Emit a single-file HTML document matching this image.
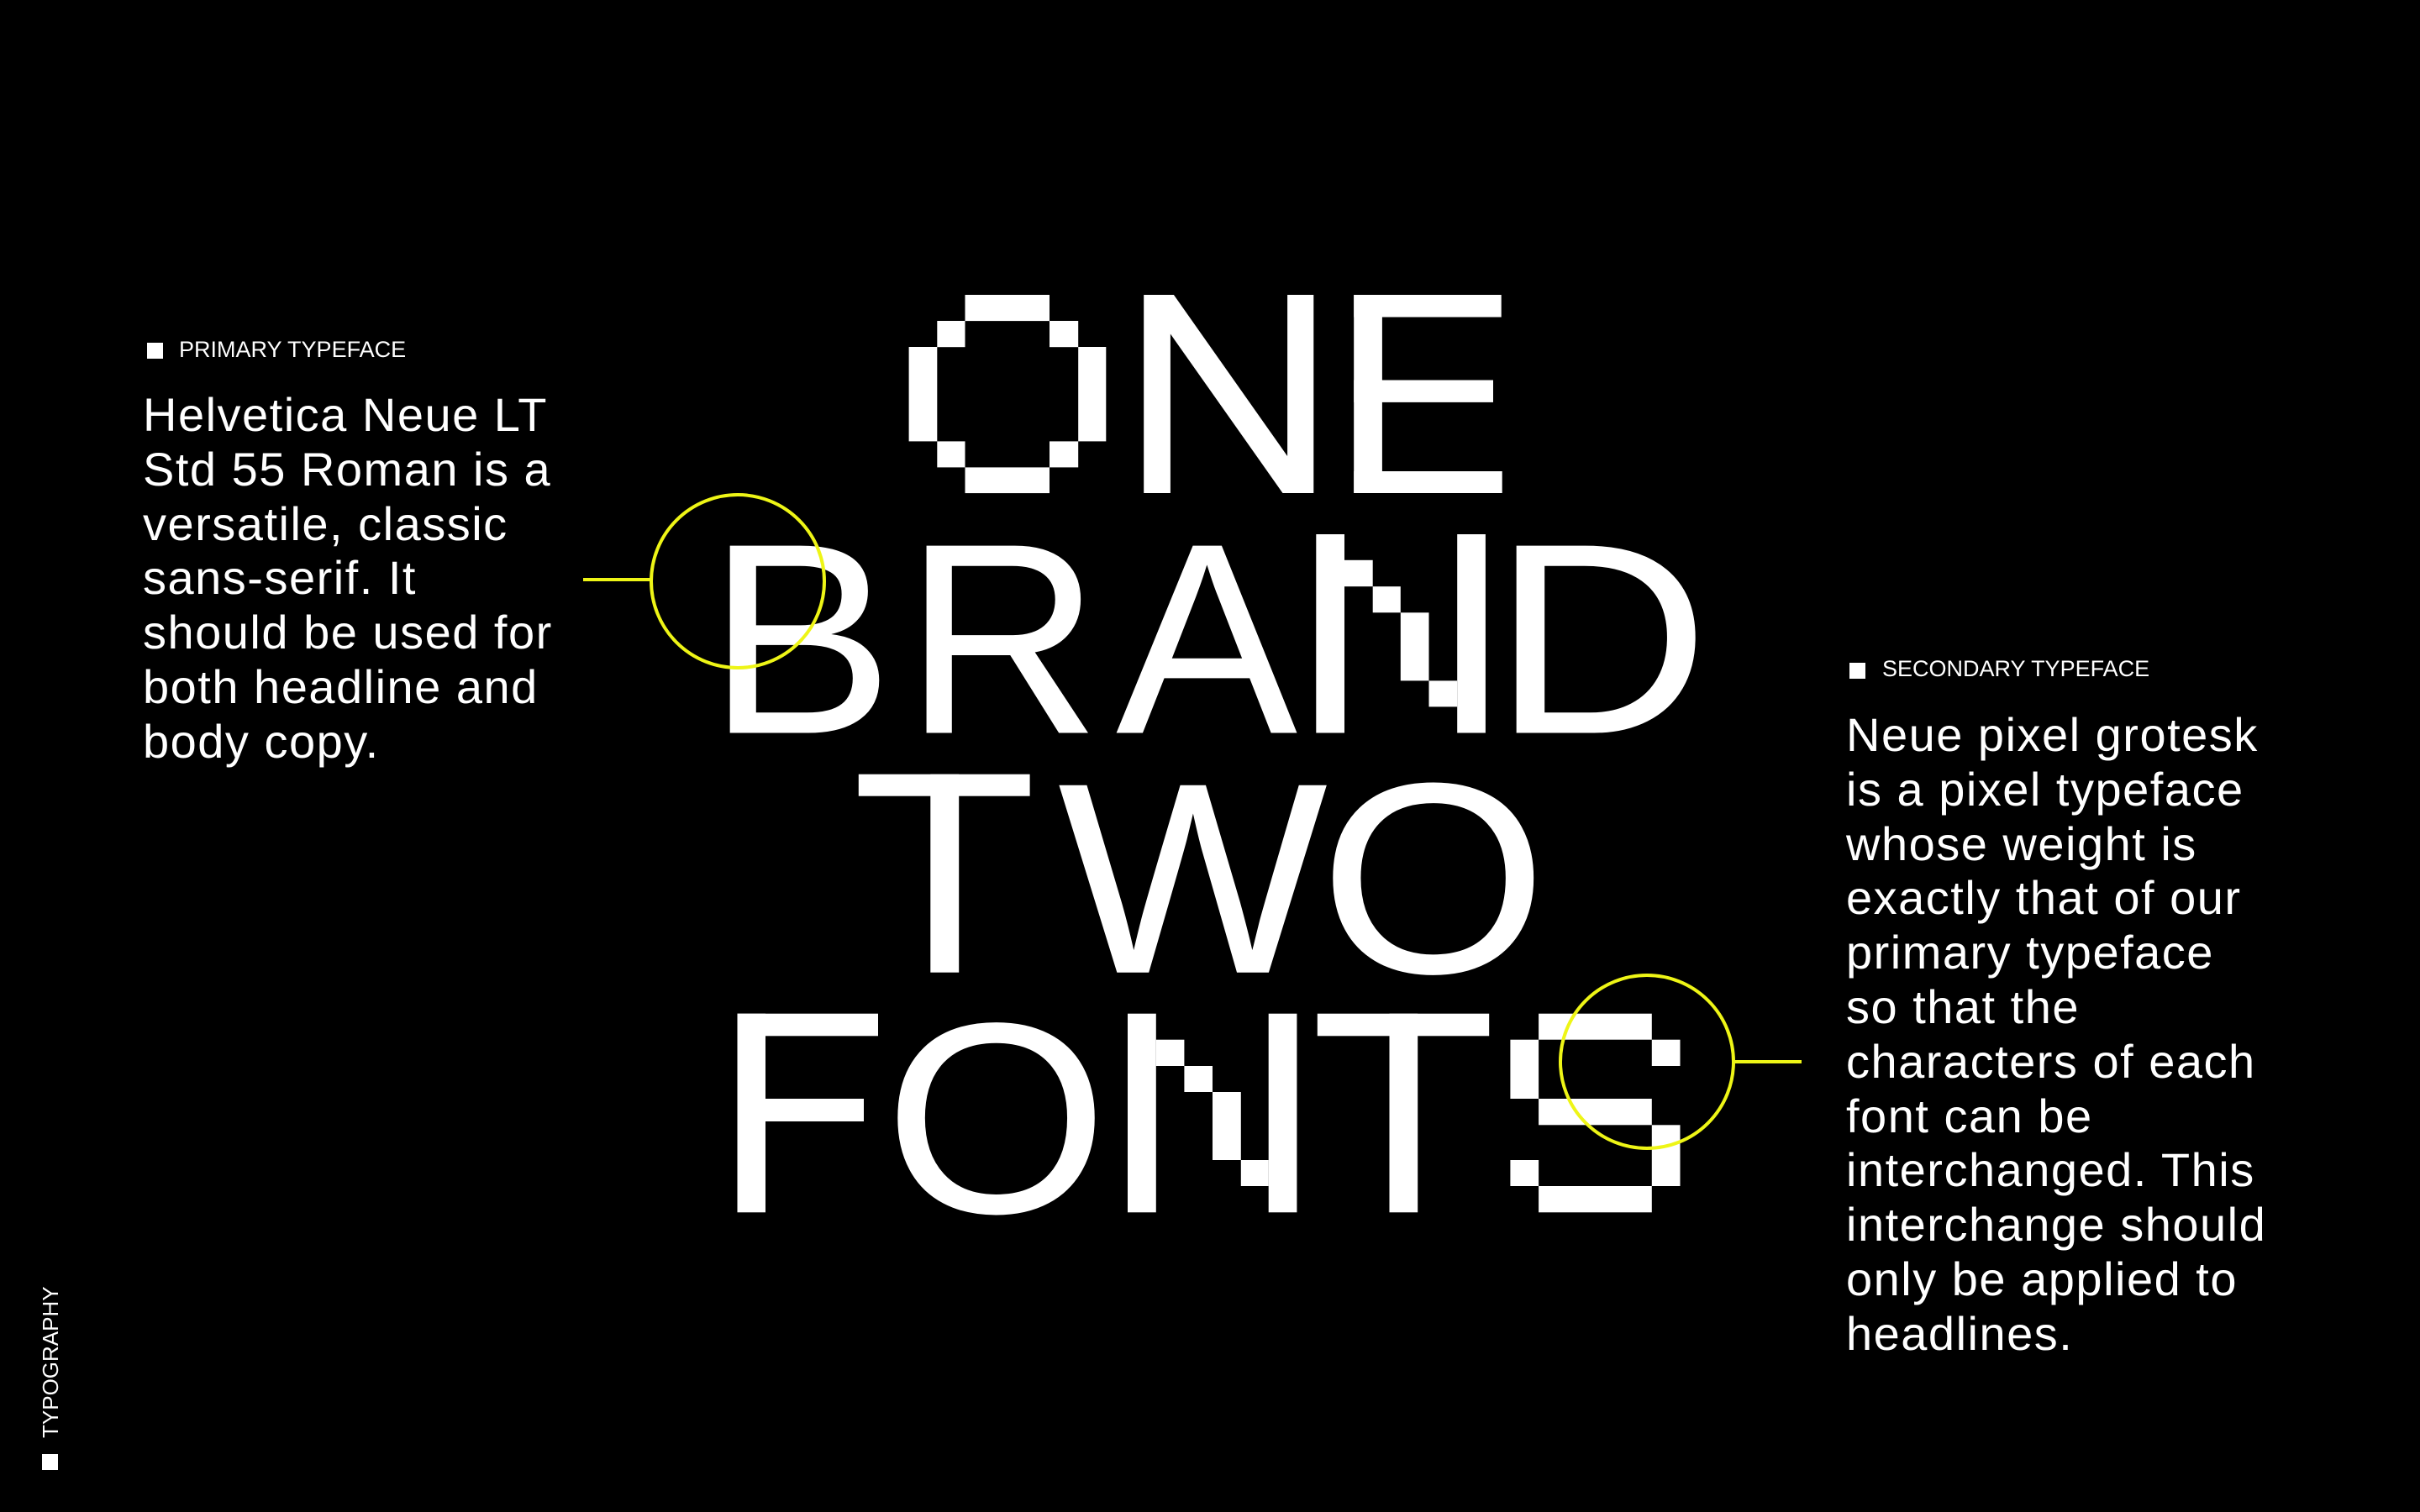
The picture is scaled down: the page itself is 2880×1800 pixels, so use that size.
<!DOCTYPE html>
<html><head><meta charset="utf-8">
<style>
html,body{margin:0;padding:0;background:#000;}
body{width:2880px;height:1800px;position:relative;overflow:hidden;font-family:"Liberation Sans",sans-serif;color:#fff;}
.sq{position:absolute;background:#fff;width:19px;height:19px;}
.lbl{position:absolute;font-size:27px;line-height:27px;white-space:nowrap;}
.body{position:absolute;font-size:56px;line-height:64.8px;letter-spacing:1.5px;white-space:nowrap;}
.hid{position:absolute;left:0;top:0;color:transparent;font-size:10px;}
</style></head><body>
<div class="hid">ONE BRAND TWO FONTS</div>

<div class="sq" style="left:175px;top:408px;"></div>
<div class="lbl" style="left:213px;top:403px;">PRIMARY TYPEFACE</div>
<div class="body" style="left:170px;top:462px;">Helvetica Neue LT<br>Std 55 Roman is a<br>versatile, classic<br>sans-serif. It<br>should be used for<br>both headline and<br>body copy.</div>

<div class="sq" style="left:2201px;top:789px;"></div>
<div class="lbl" style="left:2240px;top:783px;">SECONDARY TYPEFACE</div>
<div class="body" style="left:2197px;top:843px;">Neue pixel grotesk<br>is a pixel typeface<br>whose weight is<br>exactly that of our<br>primary typeface<br>so that the<br>characters of each<br>font can be<br>interchanged. This<br>interchange should<br>only be applied to<br>headlines.</div>

<div class="sq" style="left:50px;top:1731px;"></div>
<div style="position:absolute;left:0;top:0;transform-origin:0 0;transform:translate(47px,1712px) rotate(-90deg);font-size:26px;line-height:26px;white-space:nowrap;">TYPOGRAPHY</div>

<svg width="2880" height="1800" style="position:absolute;left:0;top:0" xmlns="http://www.w3.org/2000/svg">
<g fill="#fff">
<rect x="1148.5" y="351" width="100.5" height="31.1"/>
<rect x="1115.3" y="382" width="33.2" height="31.2"/>
<rect x="1249" y="382" width="34.2" height="31.2"/>
<rect x="1081.6" y="413" width="33.7" height="112.4"/>
<rect x="1283.2" y="413" width="33.1" height="112.4"/>
<rect x="1115.3" y="525.4" width="33.2" height="31"/>
<rect x="1249" y="525.4" width="34.2" height="31"/>
<rect x="1148.5" y="556.4" width="100.5" height="30.7"/>
<polygon points="1361.2,351 1396.9,351 1532.1,543 1532.1,351 1563.3,351 1563.3,587 1526.5,587 1392.9,397.5 1392.9,587 1361.2,587"/>
<rect x="1611.2" y="351" width="33.7" height="236"/>
<rect x="1611.2" y="351" width="175.5" height="26.5"/>
<rect x="1611.2" y="452.5" width="165.8" height="26.4"/>
<rect x="1611.2" y="561" width="176.5" height="26"/>

<text font-family="Liberation Sans" font-size="324" transform="translate(866,872.5) scale(1.03,1)" x="-24">B</text>
<text font-family="Liberation Sans" font-size="324" transform="translate(1102,872.5)" x="-26">R</text>
<text font-family="Liberation Sans" font-size="324" transform="translate(1327,872.5)" x="1">A</text>
<rect x="1566.3" y="636" width="33.7" height="236.5"/>
<rect x="1600" y="666.8" width="33.7" height="31.4"/>
<rect x="1633.7" y="698.2" width="33.1" height="31.1"/>
<rect x="1666.8" y="729.3" width="33.7" height="81.1"/>
<rect x="1700.5" y="810.4" width="33.7" height="31"/>
<rect x="1734.2" y="636" width="33.7" height="236.5"/>
<text font-family="Liberation Sans" font-size="324" transform="translate(1804,872.5) scale(1.11,1)" x="-26">D</text>

<rect x="1021.8" y="921.7" width="203.8" height="26"/>
<rect x="1107.3" y="921.7" width="33.9" height="236"/>
<text font-family="Liberation Sans" font-size="324" transform="translate(1261,1157.7) scale(1.05,1)" x="-2">W</text>
<text font-family="Liberation Sans" font-size="324" transform="translate(1587,1157.7) scale(1.08,1)" x="-16">O</text>

<rect x="877.5" y="1206.7" width="33.5" height="236.6"/>
<rect x="877.5" y="1206.7" width="167.5" height="26.6"/>
<rect x="877.5" y="1308" width="150.5" height="27"/>
<text font-family="Liberation Sans" font-size="324" transform="translate(1069,1443.3) scale(1.06,1)" x="-16">O</text>
<rect x="1342" y="1206.7" width="33.8" height="236.6"/>
<rect x="1375.8" y="1237.7" width="33.6" height="31.3"/>
<rect x="1409.4" y="1269" width="33.6" height="31"/>
<rect x="1443" y="1300" width="33.8" height="81"/>
<rect x="1476.8" y="1381" width="32.9" height="31"/>
<rect x="1509.7" y="1206.7" width="33.7" height="236.6"/>
<rect x="1567.8" y="1206.7" width="204.4" height="26.6"/>
<rect x="1653.5" y="1206.7" width="33.7" height="236.6"/>
<rect x="1831.1" y="1206.7" width="134.7" height="31"/>
<rect x="1797.4" y="1237.7" width="33.7" height="70.3"/>
<rect x="1965.8" y="1237.7" width="33.7" height="31.3"/>
<rect x="1831.1" y="1308" width="134.7" height="31.3"/>
<rect x="1965.8" y="1339.3" width="33.7" height="72.7"/>
<rect x="1797.4" y="1381" width="33.7" height="31"/>
<rect x="1831.1" y="1412" width="134.7" height="31.3"/>
</g>
<g fill="none" stroke="#eef516" stroke-width="4">
<circle cx="878" cy="692" r="103"/>
<line x1="694" y1="690" x2="775" y2="690"/>
<circle cx="1960" cy="1264" r="103"/>
<line x1="2063" y1="1264" x2="2144" y2="1264"/>
</g>
</svg>
</body></html>
